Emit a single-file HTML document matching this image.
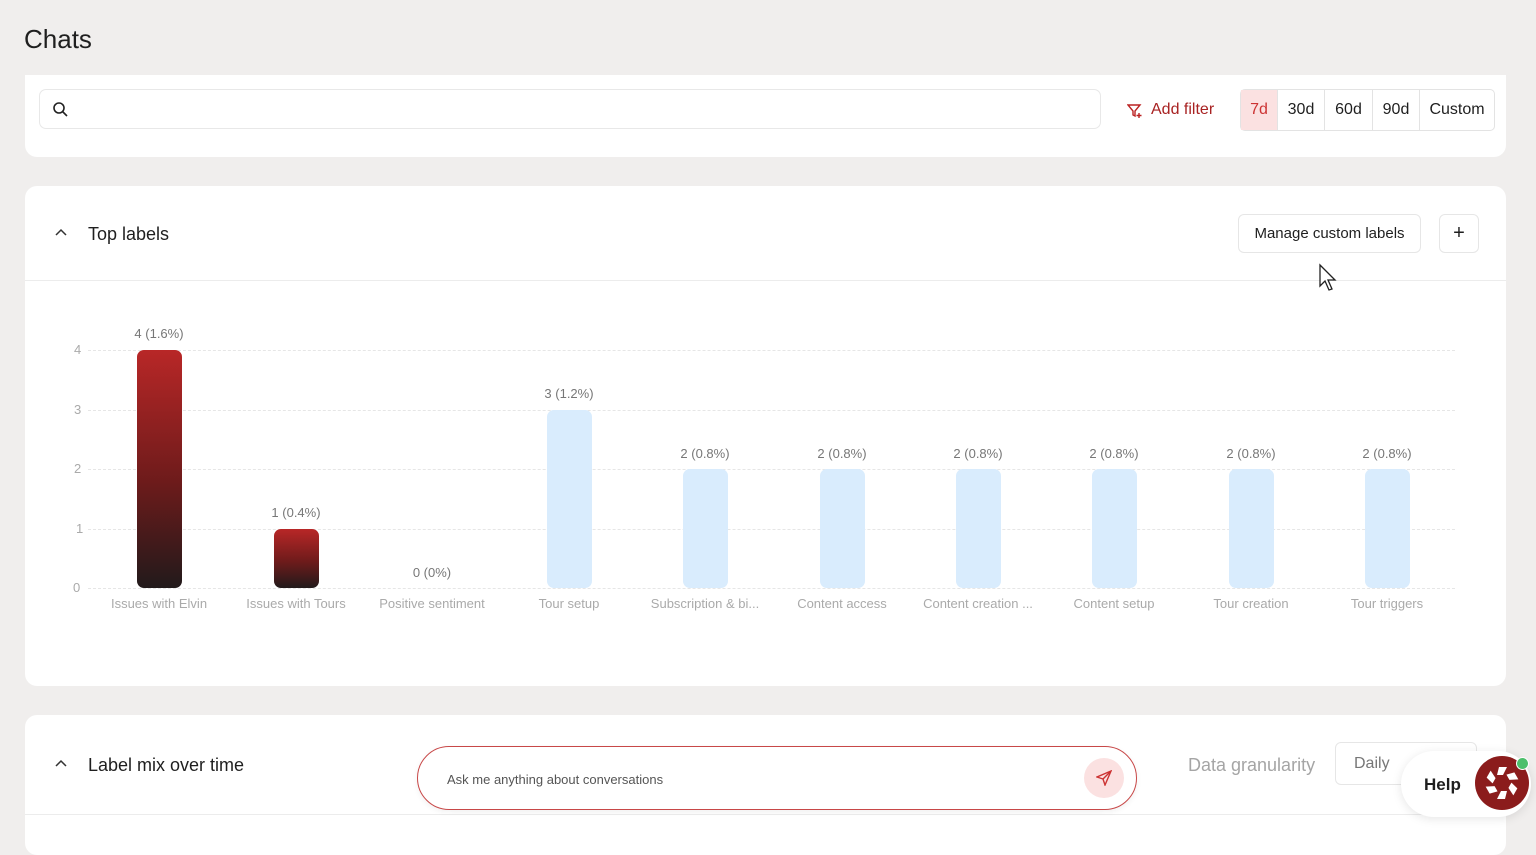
<!DOCTYPE html><html><head><style>
body{margin:0;width:1536px;height:836px;background:#f0eeed;font-family:"Liberation Sans",sans-serif;position:relative;overflow:hidden;color:#1f1f1f}
.a{position:absolute}
.card{position:absolute;background:#fff;border-radius:12px}
.btn{position:absolute;border:1px solid #e6e6e6;border-radius:6px;background:#fff;display:flex;align-items:center;justify-content:center;font-size:15px}
.grid{position:absolute;left:88px;width:1367px;border-top:1px dashed #e6e6e6}
.yl{position:absolute;left:70px;font-size:13px;color:#aaa}
.bar{position:absolute;width:45px;border-radius:7px}
.red{background:linear-gradient(#b82727,#6e1b1b 55%,#221a1b)}
.blue{background:#d9ecfd}
.vl{position:absolute;width:140px;text-align:center;font-size:13px;color:#777}
.xl{position:absolute;width:136px;text-align:center;font-size:13px;color:#aaa;top:596px;white-space:nowrap}
</style></head><body>
<div class="a" style="left:24px;top:24px;font-size:26px">Chats</div>
<div class="card" style="left:25px;top:75px;width:1481px;height:82px;border-radius:0 0 12px 12px">
 <div class="a" style="left:14px;top:14px;width:1060px;height:38px;border:1px solid #e8e8e8;border-radius:7px"></div>
 <svg class="a" style="left:27px;top:26px" width="16" height="16" viewBox="0 0 16 16" fill="none" stroke="#222" stroke-width="1.6"><circle cx="7" cy="7" r="5"/><path d="M11 11l4 4"/></svg>
 <svg class="a" style="left:1102px;top:28px" width="16" height="16" viewBox="0 0 16 16" fill="none" stroke="#b22" stroke-width="1.4"><path d="M1 2h12l-5 6v5l-2-1V8z"/><path d="M12 10v5M9.5 12.5h5"/></svg>
 <div class="a" style="left:1126px;top:26px;font-size:16px;color:#a82222">Add filter</div>
 <div class="a" style="left:1215px;top:14px;width:253px;height:40px;border:1px solid #e3e3e3;border-radius:5px;display:flex;font-size:16px">
  <div style="width:36px;background:#fbe1e1;color:#c33;display:flex;align-items:center;justify-content:center">7d</div>
  <div style="width:46px;border-left:1px solid #e3e3e3;display:flex;align-items:center;justify-content:center">30d</div>
  <div style="width:47px;border-left:1px solid #e3e3e3;display:flex;align-items:center;justify-content:center">60d</div>
  <div style="width:46px;border-left:1px solid #e3e3e3;display:flex;align-items:center;justify-content:center">90d</div>
  <div style="flex:1;border-left:1px solid #e3e3e3;display:flex;align-items:center;justify-content:center">Custom</div>
 </div>
</div>
<div class="card" style="left:25px;top:186px;width:1481px;height:500px"></div>
<div class="a" style="left:25px;top:280px;width:1481px;border-top:1px solid #ececec"></div>
<svg class="a" style="left:54px;top:227px" width="14" height="12" viewBox="0 0 14 12" fill="none" stroke="#333" stroke-width="1.5"><path d="M2 8l5-5 5 5"/></svg>
<div class="a" style="left:88px;top:224px;font-size:18px">Top labels</div>
<div class="btn" style="left:1238px;top:214px;width:181px;height:37px">Manage custom labels</div>
<div class="btn" style="left:1439px;top:214px;width:38px;height:37px;font-size:20px">+</div>
<svg class="a" style="left:1318px;top:263px" width="20" height="28" viewBox="0 0 20 28"><path d="M2 2v21l5-5 4 9 3-1-4-9h7z" fill="#fff" stroke="#222" stroke-width="1.3"/></svg>
<div class="grid" style="top:350px"></div><div class="grid" style="top:410px"></div><div class="grid" style="top:469px"></div><div class="grid" style="top:529px"></div><div class="grid" style="top:588px"></div>
<div class="yl" style="top:342px;left:74px">4</div><div class="yl" style="top:402px;left:74px">3</div><div class="yl" style="top:461px;left:74px">2</div><div class="yl" style="top:521px;left:76px">1</div><div class="yl" style="top:580px;left:73px">0</div>
<div class="bar red" style="left:137px;top:350px;height:238px"></div>
<div class="bar red" style="left:274px;top:529px;height:59px"></div>
<div class="bar blue" style="left:547px;top:410px;height:178px"></div>
<div class="bar blue" style="left:683px;top:469px;height:119px"></div>
<div class="bar blue" style="left:820px;top:469px;height:119px"></div>
<div class="bar blue" style="left:956px;top:469px;height:119px"></div>
<div class="bar blue" style="left:1092px;top:469px;height:119px"></div>
<div class="bar blue" style="left:1229px;top:469px;height:119px"></div>
<div class="bar blue" style="left:1365px;top:469px;height:119px"></div>
<div class="vl" style="left:89px;top:326px">4 (1.6%)</div>
<div class="vl" style="left:226px;top:505px">1 (0.4%)</div>
<div class="vl" style="left:362px;top:565px">0 (0%)</div>
<div class="vl" style="left:499px;top:386px">3 (1.2%)</div>
<div class="vl" style="left:635px;top:446px">2 (0.8%)</div>
<div class="vl" style="left:772px;top:446px">2 (0.8%)</div>
<div class="vl" style="left:908px;top:446px">2 (0.8%)</div>
<div class="vl" style="left:1044px;top:446px">2 (0.8%)</div>
<div class="vl" style="left:1181px;top:446px">2 (0.8%)</div>
<div class="vl" style="left:1317px;top:446px">2 (0.8%)</div>
<div class="xl" style="left:91px">Issues with Elvin</div>
<div class="xl" style="left:228px">Issues with Tours</div>
<div class="xl" style="left:364px">Positive sentiment</div>
<div class="xl" style="left:501px">Tour setup</div>
<div class="xl" style="left:637px">Subscription &amp; bi...</div>
<div class="xl" style="left:774px">Content access</div>
<div class="xl" style="left:910px">Content creation ...</div>
<div class="xl" style="left:1046px">Content setup</div>
<div class="xl" style="left:1183px">Tour creation</div>
<div class="xl" style="left:1319px">Tour triggers</div>
<div class="card" style="left:25px;top:715px;width:1481px;height:140px"></div>
<div class="a" style="left:25px;top:814px;width:1481px;border-top:1px solid #ececec"></div>
<svg class="a" style="left:54px;top:758px" width="14" height="12" viewBox="0 0 14 12" fill="none" stroke="#333" stroke-width="1.5"><path d="M2 8l5-5 5 5"/></svg>
<div class="a" style="left:88px;top:755px;font-size:18px">Label mix over time</div>
<div class="a" style="left:1188px;top:755px;font-size:18px;color:#a5a5a5">Data granularity</div>
<div class="btn" style="left:1335px;top:742px;width:142px;height:43px;justify-content:flex-start;padding-left:18px;box-sizing:border-box;color:#777;font-size:16px">Daily</div>
<div class="a" style="left:417px;top:746px;width:718px;height:62px;border:1px solid #c84848;border-radius:32px;background:#fff;box-shadow:0 2px 6px rgba(0,0,0,.06)"></div>
<div class="a" style="left:447px;top:772px;font-size:13px;color:#555">Ask me anything about conversations</div>
<div class="a" style="left:1084px;top:758px;width:40px;height:40px;border-radius:50%;background:#fbe1e1"></div>
<svg class="a" style="left:1096px;top:770px" width="16" height="16" viewBox="0 0 16 16" fill="none" stroke="#c33" stroke-width="1.4"><path d="M15 1L1 7l6 2 2 6z"/><path d="M15 1L7 9"/></svg>
<div class="a" style="left:1401px;top:751px;width:130px;height:66px;border-radius:33px;background:#fff;box-shadow:0 2px 10px rgba(0,0,0,.1)"></div>
<div class="a" style="left:1424px;top:775px;font-size:17px;font-weight:bold">Help</div>
<div class="a" style="left:1475px;top:756px;width:54px;height:54px;border-radius:50%;background:#8b1c1c"></div>
<svg class="a" style="left:1481px;top:762px" width="42" height="42" viewBox="0 0 42 42" fill="#fff"><g transform="translate(21 21)"><path id="p" d="M-3-16h8l-4 8h-6z"/><use href="#p" transform="rotate(60)"/><use href="#p" transform="rotate(120)"/><use href="#p" transform="rotate(180)"/><use href="#p" transform="rotate(240)"/><use href="#p" transform="rotate(300)"/></g></svg>
<div class="a" style="left:1516px;top:757px;width:11px;height:11px;border-radius:50%;background:#4cbf6b;border:1px solid #fff"></div>
</body></html>
